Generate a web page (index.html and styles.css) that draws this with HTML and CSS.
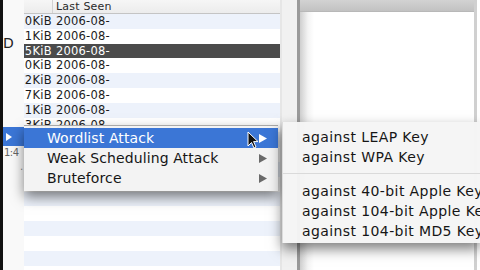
FILE: index.html
```html
<!DOCTYPE html>
<html>
<head>
<meta charset="utf-8">
<link rel="stylesheet" href="styles.css">
</head>
<body>
<div class="screen">
  <div class="edge"></div>
  <div class="win">
    <div class="gutter">
      <span class="g-d">D</span>
      <span class="g-time">1:4</span>
      <span class="g-dot">.</span>
    </div>
    <div class="table">
      <div class="thead"><div class="c-size"></div><div class="c-date">Last Seen</div></div>
      <div class="row"><div class="c-size"><span>0KiB</span></div><div class="c-date">2006-08-</div></div>
      <div class="row"><div class="c-size"><span>1KiB</span></div><div class="c-date">2006-08-</div></div>
      <div class="row sel"><div class="c-size"><span>5KiB</span></div><div class="c-date">2006-08-</div></div>
      <div class="row"><div class="c-size"><span>0KiB</span></div><div class="c-date">2006-08-</div></div>
      <div class="row"><div class="c-size"><span>2KiB</span></div><div class="c-date">2006-08-</div></div>
      <div class="row"><div class="c-size"><span>7KiB</span></div><div class="c-date">2006-08-</div></div>
      <div class="row"><div class="c-size"><span>1KiB</span></div><div class="c-date">2006-08-</div></div>
      <div class="row"><div class="c-size"><span>3KiB</span></div><div class="c-date">2006-08-</div></div>
      <div class="row"></div>
      <div class="row"></div>
      <div class="row"></div>
      <div class="row"></div>
      <div class="row"></div>
      <div class="row"></div>
      <div class="row"></div>
      <div class="row"></div>
      <div class="row"></div>
      <div class="row"></div>
    </div>
    <div class="track"></div>
  </div>
  <div class="sep"></div>
  <div class="pane">
    <div class="pane-main">
      <div class="pane-bar"></div>
      <div class="pane-body"></div>
    </div>
    <div class="pane-line"></div>
    <div class="pane-rest"></div>
  </div>
</div>

<div class="parent-hl">
  <svg class="tri" width="6" height="8" viewBox="0 0 6 8"><path d="M0 0 L6 4 L0 8 Z" fill="#fff"/></svg>
</div>

<div class="menu m2">
  <div class="item hl"><span class="label">Wordlist Attack</span><svg class="tri" width="8" height="9" viewBox="0 0 8 9"><path d="M0 0 L8 4.5 L0 9 Z" fill="#fff"/></svg></div>
  <div class="item"><span class="label">Weak Scheduling Attack</span><svg class="tri" width="8" height="9" viewBox="0 0 8 9"><path d="M0 0 L8 4.5 L0 9 Z" fill="#6a6a6a"/></svg></div>
  <div class="item"><span class="label">Bruteforce</span><svg class="tri" width="8" height="9" viewBox="0 0 8 9"><path d="M0 0 L8 4.5 L0 9 Z" fill="#6a6a6a"/></svg></div>
</div>

<div class="menu m3">
  <div class="item">against LEAP Key</div>
  <div class="item">against WPA Key</div>
  <div class="msep"></div>
  <div class="item">against 40-bit Apple Key</div>
  <div class="item">against 104-bit Apple Key</div>
  <div class="item">against 104-bit MD5 Key</div>
</div>

<svg class="cursor" width="12" height="18" viewBox="0 0 12 18"><path d="M1 1 L1 15 L4.5 11.5 L7 17 L9 16 L6.6 10.6 L11 10.6 Z" fill="#111" stroke="#fff" stroke-width="1"/></svg>
</body>
</html>
```

FILE: styles.css
```css
html, body {
  margin: 0;
  padding: 0;
}
body {
  width: 480px;
  height: 270px;
  overflow: hidden;
  position: relative;
  font-family: "DejaVu Sans", "Liberation Sans", sans-serif;
  color: #1c1c1c;
  background: #fff;
}
.screen {
  display: flex;
  width: 480px;
  height: 270px;
}
.edge {
  width: 3px;
  background: #121212;
  flex: none;
}
.win {
  display: flex;
  width: 294px;
  flex: none;
  background: #fafafa;
}
.gutter {
  width: 21px;
  flex: none;
  display: flex;
  flex-direction: column;
  overflow: hidden;
  background: #f9f9f9;
}
.g-d {
  margin-top: 36px;
  font-size: 14px;
  line-height: 14px;
  color: #222;
}
.g-time {
  margin-top: 98px;
  font-size: 10px;
  line-height: 10px;
  color: #666;
  margin-left: 1px;
  letter-spacing: -0.5px;
}
.g-dot {
  margin-top: 4px;
  margin-left: 17px;
  font-size: 10px;
  line-height: 10px;
  color: #888;
}
.table {
  width: 256px;
  flex: none;
  display: flex;
  flex-direction: column;
  font-size: 11.5px;
}
.thead {
  height: 13px;
  flex: none;
  display: flex;
  background: linear-gradient(#f6f6f6, #ececec);
  border-bottom: 1px solid #c4c4c4;
  line-height: 13px;
  color: #2a2a2a;
  font-size: 11px;
}
.thead .c-size {
  border-right: 1px solid #d2d2d2;
  width: 28px;
}
.row {
  height: 14.8px;
  flex: none;
  display: flex;
  line-height: 14.8px;
  background: #fff;
}
.row:nth-child(even) {
  background: #edf2fb;
}
.row.sel {
  background: #4b4b4b;
  color: #fff;
}
.c-size {
  width: 29px;
  flex: none;
  display: flex;
  justify-content: flex-end;
  overflow: hidden;
  white-space: nowrap;
}
.c-size span {
  padding-right: 1px;
  letter-spacing: 0.3px;
}
.c-date {
  padding-left: 3px;
  white-space: nowrap;
  letter-spacing: 0.2px;
}
.track {
  width: 17px;
  flex: none;
  background: #f1f1f1;
  border-left: 2px solid #e6e6e6;
  box-sizing: border-box;
}
.sep {
  width: 3px;
  flex: none;
  background: #9a9a9a;
}
.pane {
  flex: 1;
  display: flex;
}
.pane-main {
  flex: 1;
  display: flex;
  flex-direction: column;
}
.pane-bar {
  height: 11px;
  flex: none;
  background: linear-gradient(#d2d2d2, #c2c2c2);
  border-bottom: 1px solid #b8b8b8;
}
.pane-body {
  flex: 1;
  background: linear-gradient(to right, #cfcfcf, #f4f4f4 8px, #fff 14px);
}
.pane-line {
  width: 3px;
  flex: none;
  background: #d0d0d0;
}
.pane-rest {
  width: 3px;
  flex: none;
  background: #fff;
}

.parent-hl {
  position: absolute;
  left: 3px;
  top: 127px;
  width: 21px;
  height: 19px;
  background: #3b76d6;
  display: flex;
  align-items: center;
  padding-left: 3px;
  box-sizing: border-box;
}

.menu {
  position: absolute;
  background: rgba(243, 243, 243, 0.97);
  box-shadow: 0 6px 12px rgba(0, 0, 0, 0.5);
  font-size: 14px;
  color: #161616;
}
.m2 {
  left: 24px;
  top: 125px;
  width: 254px;
  padding: 2px 0 4px 0;
  border-top: 1px solid #a8a8a8;
  box-sizing: border-box;
  height: 66px;
}
.m2 .item {
  height: 20px;
  display: flex;
  align-items: center;
  padding-left: 23px;
  padding-right: 11px;
}
.m2 .label {
  flex: 1;
  white-space: nowrap;
  letter-spacing: 0.1px;
}
.m2 .item.hl {
  background: #3b76d6;
  color: #fff;
}
.m3 {
  left: 282px;
  top: 122px;
  width: 198px;
  height: 121px;
  overflow: hidden;
  box-sizing: border-box;
  padding: 5px 0 2px 0;
  background: rgba(245, 245, 245, 0.97);
  border-left: 1px solid #dcdcdc;
}
.m3 .item {
  height: 20px;
  line-height: 20px;
  padding-left: 19px;
  white-space: nowrap;
  letter-spacing: 0.4px;
}
.msep {
  height: 14px;
  display: flex;
  flex-direction: column;
  justify-content: center;
}
.msep::before {
  content: "";
  display: block;
  height: 1px;
  margin-top: -2px;
  background: #dadada;
}
.cursor {
  position: absolute;
  left: 247px;
  top: 131px;
}
```
